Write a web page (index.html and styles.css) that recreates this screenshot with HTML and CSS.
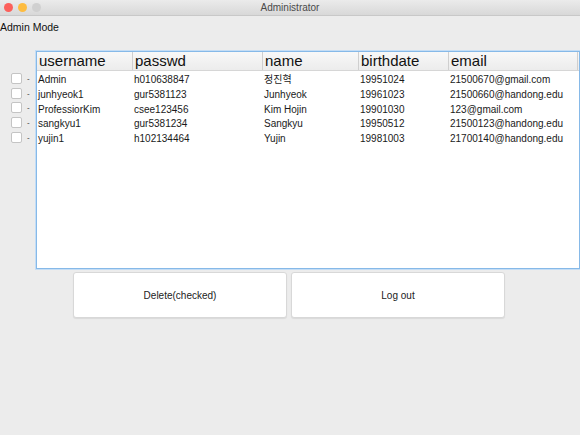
FILE: index.html
```html
<!DOCTYPE html>
<html lang="en">
<head>
    <meta charset="UTF-8">
    <meta name="viewport" content="width=device-width, initial-scale=1.0">
    <title>Administrator</title>
    <link rel="stylesheet" href="styles.css">
</head>
<body>
    <div class="titlebar">
        <div class="lights">
            <span class="light red"></span>
            <span class="light yellow"></span>
            <span class="light gray"></span>
        </div>
        <div class="title">Administrator</div>
    </div>

    <div class="mode">Admin Mode</div>

    <div class="main">
        <div class="checks">
            <div class="check-row"><span class="box"></span><span class="dot">-</span></div>
            <div class="check-row"><span class="box"></span><span class="dot">-</span></div>
            <div class="check-row"><span class="box"></span><span class="dot">-</span></div>
            <div class="check-row"><span class="box"></span><span class="dot">-</span></div>
            <div class="check-row"><span class="box"></span><span class="dot">-</span></div>
        </div>

        <div class="table-panel">
            <div class="grid head">
                <div>username</div>
                <div>passwd</div>
                <div>name</div>
                <div>birthdate</div>
                <div>email</div>
                <div></div>
            </div>
            <div class="rows">
                <div class="grid row">
                    <div>Admin</div><div>h010638847</div><div>정진혁</div><div>19951024</div><div>21500670@gmail.com</div><div></div>
                </div>
                <div class="grid row">
                    <div>junhyeok1</div><div>gur5381123</div><div>Junhyeok</div><div>19961023</div><div>21500660@handong.edu</div><div></div>
                </div>
                <div class="grid row">
                    <div>ProfessiorKim</div><div>csee123456</div><div>Kim Hojin</div><div>19901030</div><div>123@gmail.com</div><div></div>
                </div>
                <div class="grid row">
                    <div>sangkyu1</div><div>gur5381234</div><div>Sangkyu</div><div>19950512</div><div>21500123@handong.edu</div><div></div>
                </div>
                <div class="grid row">
                    <div>yujin1</div><div>h102134464</div><div>Yujin</div><div>19981003</div><div>21700140@handong.edu</div><div></div>
                </div>
            </div>
        </div>
    </div>

    <div class="buttons">
        <button class="btn">Delete(checked)</button>
        <button class="btn">Log out</button>
    </div>
</body>
</html>
```

FILE: styles.css
```css
body {
    margin: 0;
    background-color: #ececec;
    font-family: 'Liberation Sans', 'Noto Sans CJK KR', sans-serif;
    color: #222;
    height: 435px;
    overflow: hidden;
}

.titlebar {
    height: 15px;
    background: linear-gradient(#ebebeb, #d8d8d8);
    border-bottom: 1px solid #c8c8c8;
    display: flex;
    align-items: center;
    position: relative;
}

.lights {
    display: flex;
    gap: 5px;
    padding-left: 4px;
}

.light {
    width: 9px;
    height: 9px;
    border-radius: 50%;
}

.red { background-color: #fc605b; }
.yellow { background-color: #fdbc40; }
.gray { background-color: #d0d0d0; }

.title {
    position: absolute;
    left: 0;
    right: 0;
    text-align: center;
    font-size: 10px;
    color: #4a4a4a;
}

.mode {
    font-size: 10.5px;
    color: #111;
    margin-top: 4px;
    height: 14px;
    line-height: 14px;
}

.main {
    display: flex;
    margin-top: 17px;
}

.checks {
    width: 35px;
    padding-top: 20px;
}

.check-row {
    height: 14.75px;
    display: flex;
    align-items: center;
}

.box {
    width: 9px;
    height: 9px;
    margin-left: 11px;
    background-color: #fff;
    border: 1px solid #c4c4c4;
    border-radius: 2px;
}

.dot {
    font-size: 8px;
    margin-left: 5px;
    color: #333;
}

.table-panel {
    width: 542px;
    height: 216px;
    background-color: #fff;
    border: 1px solid #86b9e8;
    box-shadow: 0 0 0 1px #c4ddf5;
    margin-left: 1px;
}

.grid {
    display: grid;
    grid-template-columns: 96px 130px 96px 90px 129px 1fr;
}

.head {
    height: 18px;
    background: linear-gradient(#f8f8f8, #ececec);
    border-bottom: 1px solid #d6d6d6;
    font-size: 15px;
    color: #111;
}

.head div {
    border-right: 1px solid #cfcfcf;
    padding-left: 2px;
    line-height: 18px;
}

.head div:last-child {
    border-right: none;
}

.rows {
    padding-top: 2px;
}

.row {
    height: 14.75px;
    font-size: 10px;
    line-height: 14.75px;
    color: #1a1a1a;
}

.row div {
    padding-left: 1px;
    white-space: nowrap;
}

.buttons {
    display: flex;
    gap: 4px;
    margin-top: 3px;
    padding-left: 73px;
}

.btn {
    width: 214px;
    height: 46px;
    background-color: #fff;
    border: 1px solid #d8d8d8;
    border-radius: 3px;
    box-shadow: 0 1px 1px rgba(0, 0, 0, 0.08);
    font-family: 'Liberation Sans', sans-serif;
    font-size: 10px;
    color: #222;
}
```
